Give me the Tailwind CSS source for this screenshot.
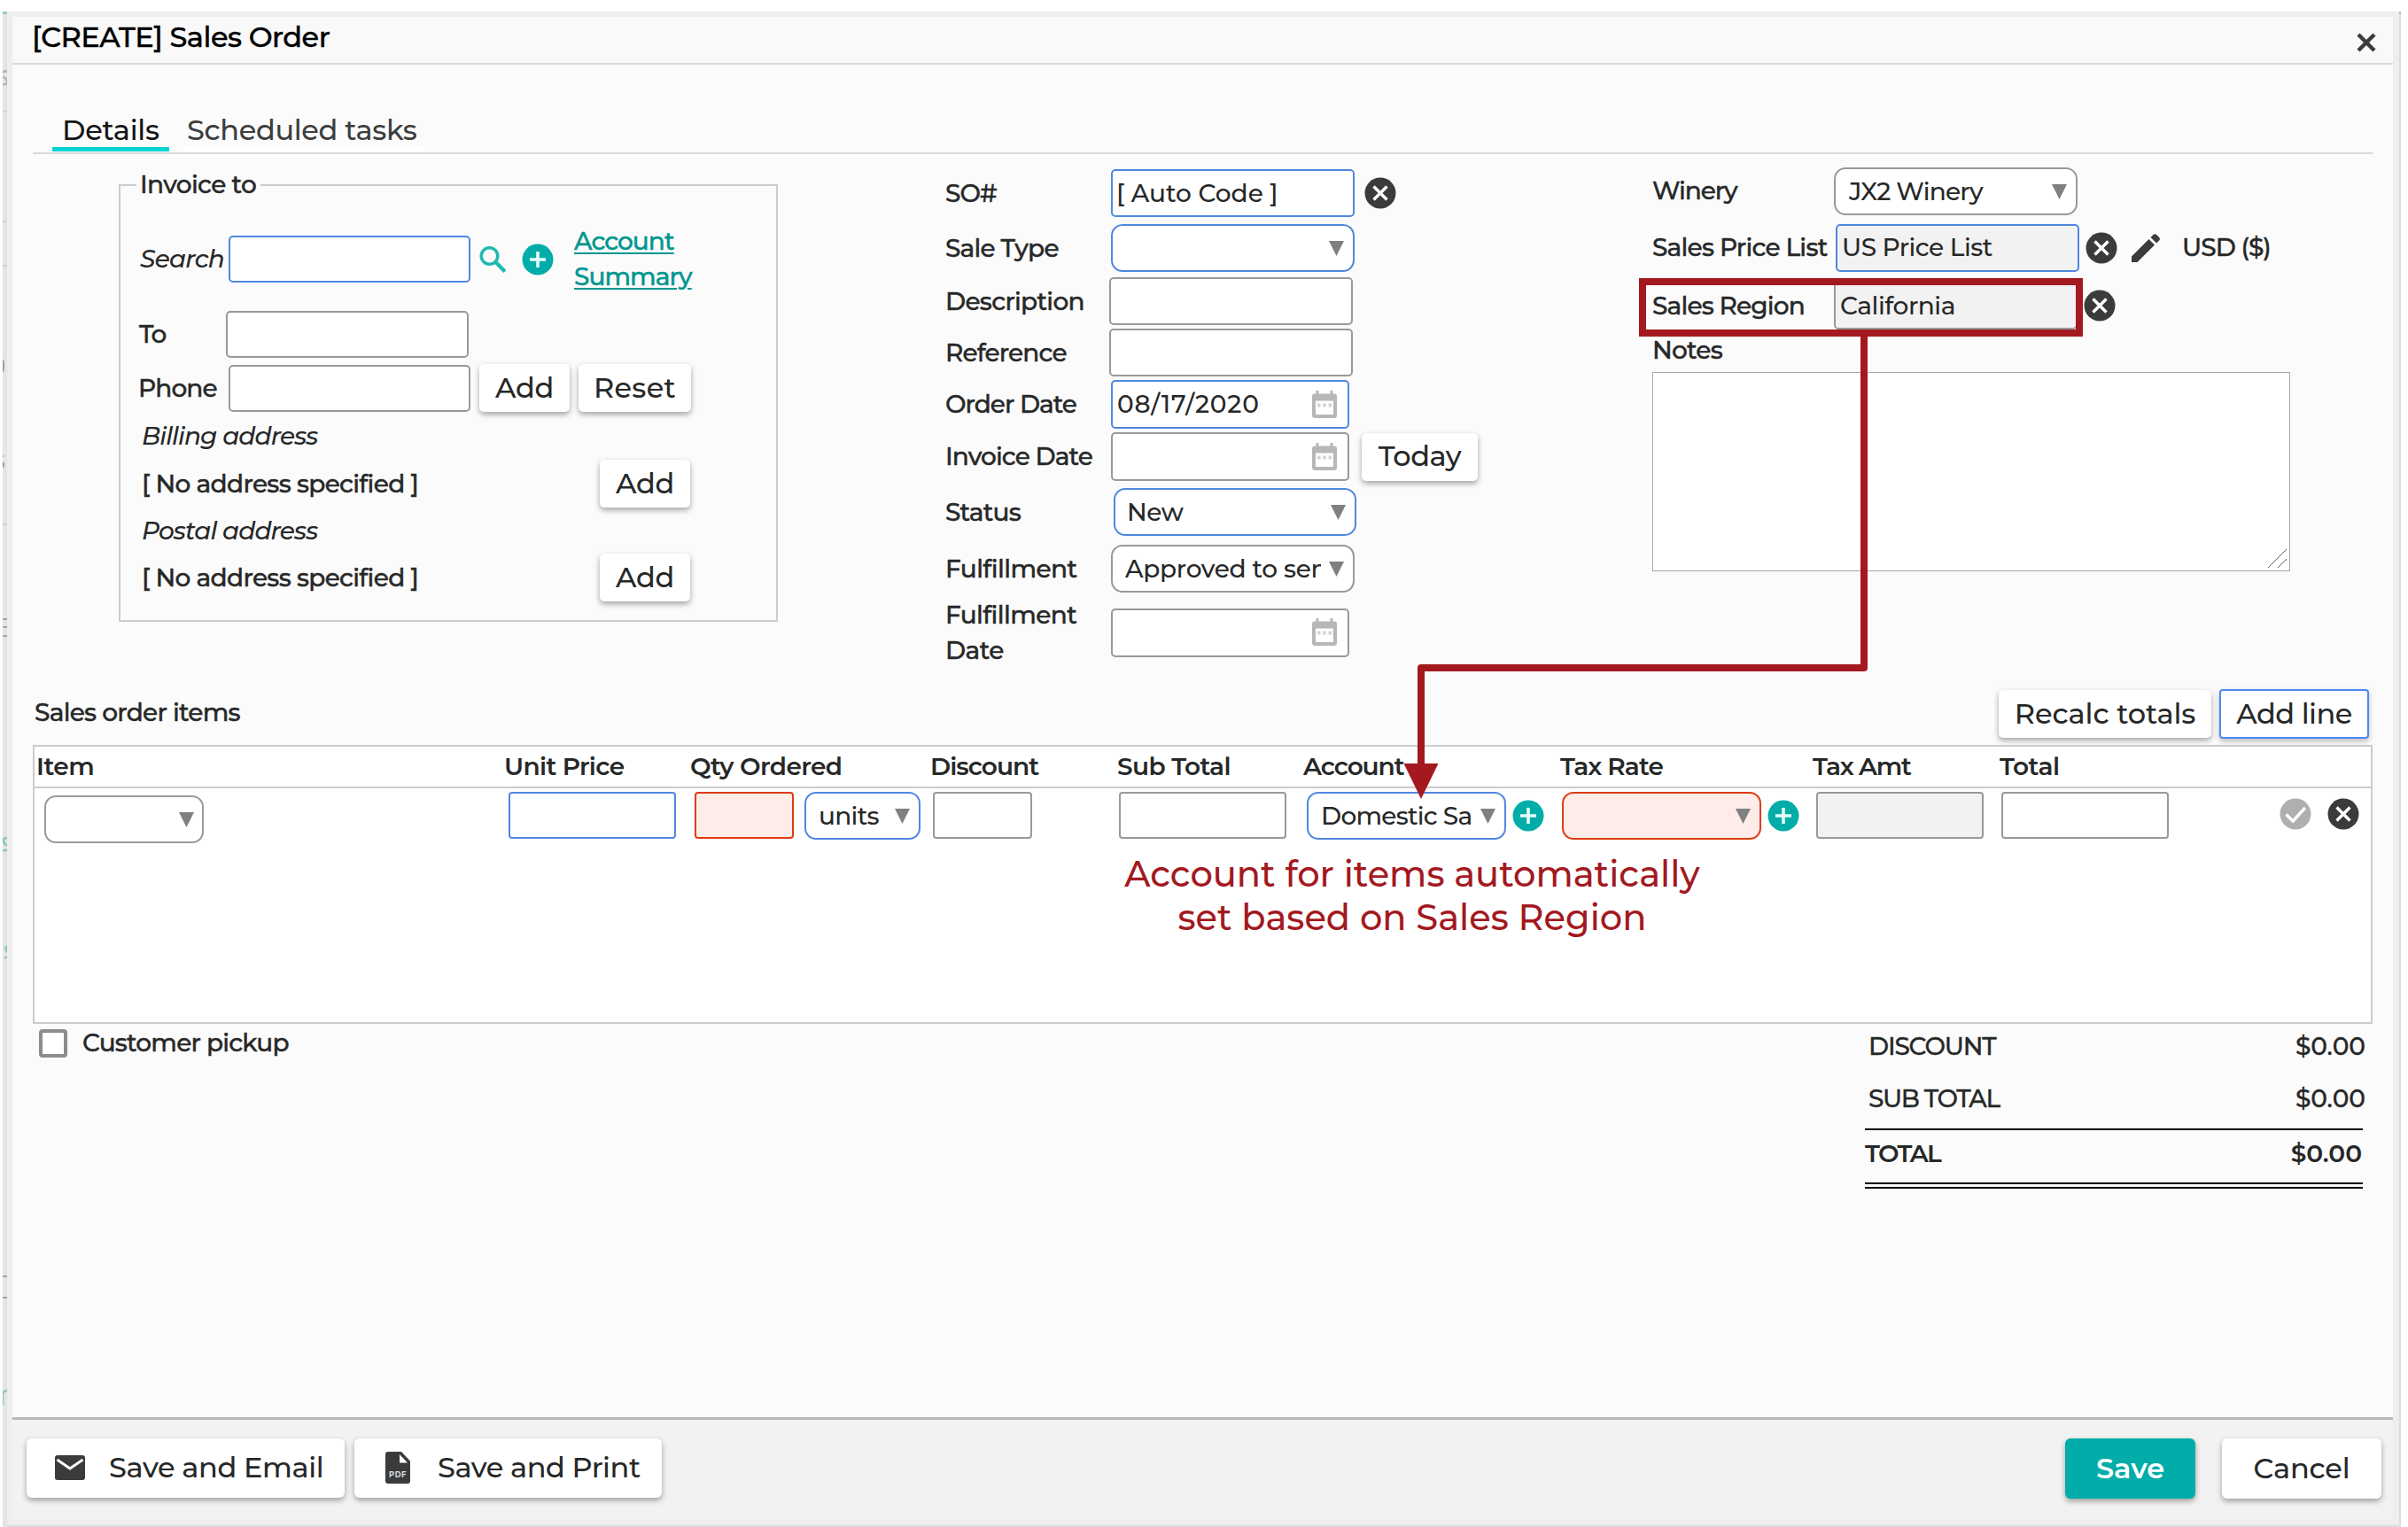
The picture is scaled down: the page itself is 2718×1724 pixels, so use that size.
<!DOCTYPE html>
<html lang="en">
<head>
    <meta charset="UTF-8">
    <meta name="viewport" content="width=device-width, initial-scale=1.0">
    <title>[CREATE] Sales Order</title>
    <!-- Tailwind CSS -->
    <script src="https://cdn.jsdelivr.net/npm/@tailwindcss/browser@4"></script>
</head>
<body class="relative w-[2718px] h-[1724px] overflow-hidden bg-white font-['Montserrat','Inter',sans-serif] text-[28px] leading-[40px] font-medium text-[#262828] whitespace-nowrap">
    <!-- Icon sprite -->
    <svg class="hidden">
        <symbol id="i-clear" viewBox="0 0 36 36"><circle cx="18" cy="18" r="17.5" fill="#3a3c3b"/><path d="M10.5 10.5l15 15M25.5 10.5l-15 15" stroke="#fff" stroke-width="3.4"/></symbol>
        <symbol id="i-plus" viewBox="0 0 36 36"><circle cx="18" cy="18" r="17.5" fill="#02ada9"/><path d="M18 9v18M9 18h18" stroke="#e6fbfa" stroke-width="3.6"/></symbol>
        <symbol id="i-check" viewBox="0 0 36 36"><circle cx="18" cy="18" r="17.5" fill="#aeb0af"/><path d="M7.500 18.500l7.500 7.500L29 11" fill="none" stroke="#fff" stroke-width="3.4"/></symbol>
        <symbol id="i-arrow" viewBox="0 0 17 17"><path d="M0 0h17L8.500 17z" fill="#808080"/></symbol>
        <symbol id="i-cal" viewBox="0 0 28 32"><path d="M4.500 0h3v3.500h13V0h3v3.500H25a3 3 0 0 1 3 3V28a3 3 0 0 1-3 3H3a3 3 0 0 1-3-3V6.500a3 3 0 0 1 3-3h1.500z" fill="#b6b8b7"/><path d="M4 11.500h20V27H4z" fill="#fff"/><path d="M6 14.500h3.500v4H6zM12.200 14.500h3.500v4h-3.500zM18.500 14.500H22v4h-3.500z" fill="#d2d3d3"/></symbol>
    </svg>

    <!-- Page behind the dialog -->
    <div class="absolute left-[3px] top-[13px] w-[2707px] h-[1711px] bg-[#dcdcdc] border-t-[3px] border-[#8fcfcb]"></div>
    <svg class="absolute left-[3px] top-0 w-[5px] h-[1724px]" viewBox="0 0 5 1724" fill="none">
        <path d="M0 16h5v1708H0z" fill="#e3e4e4"/>
        <path d="M0 82q4-4 5 0M0 87q5 1 5 5t-5 3" stroke="#b5b5b5" stroke-width="2.500"/>
        <path d="M0 126h5M0 250h5M0 300h5M0 592h5" stroke="#d2d2d2" stroke-width="2"/>
        <path d="M0 406q2 7 0 14M0 514v2M0 522q2 2 0 6" stroke="#999" stroke-width="2"/>
        <path d="M0 699h5M0 708h5M0 718h5M0 1441h5M0 1465h5" stroke="#a5a5a5" stroke-width="2"/>
        <path d="M5 946q-5 0-4 4t4 4M0 960h5M5 1068q-3 3 0 7M2 1081h3M0 1574q1-4 5-4M0 1574v12" stroke="#8cc5c3" stroke-width="2.500"/>
    </svg>

    <!-- Dialog -->
    <div class="absolute left-[8px] top-[13px] w-[2700px] h-[1709px] border-[6px] border-r-[7px] border-b-[7px] border-[#eee] bg-[#fbfbfb] flex flex-col">
        <!-- Title bar -->
        <header class="h-[54px] shrink-0 border-b-2 border-[#dadada] bg-[#f9f9f9] flex items-center justify-between pl-[22px] pr-[19px] pb-[6px] text-[32px] text-black tracking-[-.5px]">
            <h1 class="[-webkit-text-stroke:.4px]">[CREATE] Sales Order</h1>
            <svg class="w-[22px] h-[22px] mt-[12px]" viewBox="0 0 22 22"><path d="M2 2l18 18M20 2L2 20" stroke="#3a3c3b" stroke-width="4.500"/></svg>
        </header>

        <main class="grow px-[23px]">
            <!-- Tabs -->
            <nav class="h-[101px] pt-[55px] pl-[22px] flex gap-[12px] border-b-2 border-[#dadada] text-[32px] leading-[38px]">
                <div class="w-[132px] h-[43px] border-b-[5px] border-[#00d2d0] pl-[11px] tracking-[-.28px] text-[#141616]">Details</div>
                <div class="w-[280px] h-[43px] rounded-b-xl border-b-[5px] border-white pl-[8px] tracking-[-.35px] text-[#3c3e3e]">Scheduled tasks</div>
            </nav>

            <div class="flex h-[605px]">
                <!-- Invoice to -->
                <section class="relative ml-[97px] mt-[34px] w-[744px] h-[494px] shrink-0 border-2 border-[#ccc] pl-[20px]">
                    <div class="absolute left-[18px] -top-[22px] bg-[#fbfbfb] px-[4px] w-[140px] [-webkit-text-stroke:.4px] tracking-[-.65px]">Invoice to</div>
                    <div class="mt-[42px] h-[81px] flex items-center">
                        <div class="w-[102px] pl-[2px] pb-px italic tracking-[-.75px]">Search</div>
                        <div class="w-[273px] h-[53px] bg-white border-2 border-[#5087e0] rounded-[5px]"></div>
                        <svg class="ml-[10px] w-[30px] h-[31px]" viewBox="0 0 30 31" fill="none" stroke="#21b8b4"><circle cx="11.500" cy="12" r="9.300" stroke-width="3.400"/><path d="M18 18.500l11 11" stroke-width="4.400"/></svg>
                        <svg class="ml-[18px] w-[36px] h-[36px]"><use href="#i-plus"/></svg>
                        <div class="ml-[23px] pb-[2px] [-webkit-text-stroke:.4px] text-[#00968f] underline decoration-2 underline-offset-[3px]">
                            <div class="tracking-[-.95px]">Account</div>
                            <div class="tracking-[-.95px]">Summary</div>
                        </div>
                    </div>
                    <div class="mt-[18px] h-[53px] flex items-center">
                        <div class="w-[99px] pl-px pb-px [-webkit-text-stroke:.4px] tracking-[-1.3px]">To</div>
                        <div class="w-[274px] h-[53px] bg-white border-2 border-[#999] rounded-[5px]"></div>
                    </div>
                    <div class="mt-[7px] h-[54px] flex items-center">
                        <div class="w-[102px] pb-px [-webkit-text-stroke:.4px] tracking-[-.9px]">Phone</div>
                        <div class="w-[273px] h-[53px] bg-white border-2 border-[#999] rounded-[5px]"></div>
                        <div class="ml-[10px] w-[102px] h-[54px] bg-white rounded-[5px] shadow-[0_3px_6px_rgba(0,0,0,.35)] flex items-center justify-center text-[32px] tracking-[-.3px]">Add</div>
                        <div class="ml-[10px] w-[127px] h-[54px] bg-white rounded-[5px] shadow-[0_3px_6px_rgba(0,0,0,.35)] flex items-center justify-center text-[32px] tracking-[.3px]">Reset</div>
                    </div>
                    <div class="h-[54px] pl-[4px] flex items-center italic tracking-[-.9px]">Billing address</div>
                    <div class="h-[54px] pl-[4px] flex items-center">
                        <div class="w-[517px] pb-px [-webkit-text-stroke:.4px] tracking-[-.68px]">[ No address specified ]</div>
                        <div class="w-[102px] h-[54px] bg-white rounded-[5px] shadow-[0_3px_6px_rgba(0,0,0,.35)] flex items-center justify-center text-[32px] tracking-[-.3px]">Add</div>
                    </div>
                    <div class="h-[52px] pl-[4px] flex items-center italic tracking-[-.9px]">Postal address</div>
                    <div class="h-[54px] pl-[4px] flex items-center">
                        <div class="w-[517px] pb-px [-webkit-text-stroke:.4px] tracking-[-.68px]">[ No address specified ]</div>
                        <div class="w-[102px] h-[54px] bg-white rounded-[5px] shadow-[0_3px_6px_rgba(0,0,0,.35)] flex items-center justify-center text-[32px] tracking-[-.3px]">Add</div>
                    </div>
                </section>

                <!-- Order details -->
                <section class="ml-[189px] pt-[17px] w-[798px] shrink-0">
                    <div class="h-[54px] flex items-center">
                        <div class="w-[187px] pb-px [-webkit-text-stroke:.4px] tracking-[-1px]">SO#</div>
                        <div class="w-[275px] h-[54px] bg-white border-2 border-[#5087e0] rounded-[5px] pl-[4px] flex items-center pb-px">[ Auto Code ]</div>
                        <svg class="ml-[11px] w-[36px] h-[36px]"><use href="#i-clear"/></svg>
                    </div>
                    <div class="mt-[8px] h-[54px] flex items-center">
                        <div class="w-[187px] pb-px [-webkit-text-stroke:.4px] tracking-[-.8px]">Sale Type</div>
                        <div class="w-[275px] h-[54px] bg-white border-2 border-[#5087e0] rounded-[13px] pr-[10px] flex items-center justify-end"><svg class="w-[17px] h-[17px]"><use href="#i-arrow"/></svg></div>
                    </div>
                    <div class="mt-[6px] h-[54px] flex items-center">
                        <div class="w-[185px] pb-px [-webkit-text-stroke:.4px] tracking-[-.72px]">Description</div>
                        <div class="w-[275px] h-[54px] bg-white border-2 border-[#999] rounded-[5px]"></div>
                    </div>
                    <div class="mt-[4px] h-[54px] flex items-center">
                        <div class="w-[185px] pb-px [-webkit-text-stroke:.4px] tracking-[-.87px]">Reference</div>
                        <div class="w-[275px] h-[54px] bg-white border-2 border-[#999] rounded-[5px]"></div>
                    </div>
                    <div class="mt-[4px] h-[55px] flex items-center">
                        <div class="w-[187px] pb-[2px] [-webkit-text-stroke:.4px] tracking-[-1px]">Order Date</div>
                        <div class="w-[269px] h-[55px] bg-white border-2 border-[#5087e0] rounded-[5px] pl-[5px] pr-[12px] flex items-center justify-between tracking-[.8px]"><span class="pb-px">08/17/2020</span><svg class="w-[28px] h-[32px]"><use href="#i-cal"/></svg></div>
                    </div>
                    <div class="mt-[4px] h-[55px] flex items-center">
                        <div class="w-[187px] pb-[2px] [-webkit-text-stroke:.4px] tracking-[-.9px]">Invoice Date</div>
                        <div class="w-[269px] h-[55px] bg-white border-2 border-[#999] rounded-[5px] pr-[12px] flex items-center justify-end"><svg class="w-[28px] h-[32px]"><use href="#i-cal"/></svg></div>
                        <div class="ml-[14px] w-[131px] h-[54px] bg-white rounded-[5px] shadow-[0_3px_6px_rgba(0,0,0,.35)] flex items-center justify-center pb-[2px] text-[32px] tracking-[-.45px]">Today</div>
                    </div>
                    <div class="mt-[8px] h-[54px] flex items-center">
                        <div class="w-[190px] pb-px [-webkit-text-stroke:.4px] tracking-[-.8px]">Status</div>
                        <div class="w-[274px] h-[54px] bg-white border-2 border-[#5087e0] rounded-[13px] pl-[13px] pr-[10px] flex items-center justify-between tracking-[-.4px]"><span class="pb-px">New</span><svg class="w-[17px] h-[17px]"><use href="#i-arrow"/></svg></div>
                    </div>
                    <div class="mt-[10px] h-[54px] flex items-center">
                        <div class="w-[187px] pb-px [-webkit-text-stroke:.4px] tracking-[-.57px]">Fulfillment</div>
                        <div class="w-[275px] h-[54px] bg-white border-2 border-[#999] rounded-[13px] pl-[14px] pr-[10px] flex items-center justify-between tracking-[-.3px]"><span class="w-[221px] overflow-hidden pb-px">Approved to send</span><svg class="w-[17px] h-[17px]"><use href="#i-arrow"/></svg></div>
                    </div>
                    <div class="mt-[5px] h-[80px] flex items-center">
                        <div class="w-[187px] pb-px [-webkit-text-stroke:.4px] tracking-[-.6px]">Fulfillment<br>Date</div>
                        <div class="w-[269px] h-[55px] bg-white border-2 border-[#999] rounded-[5px] pr-[12px] flex items-center justify-end"><svg class="w-[28px] h-[32px]"><use href="#i-cal"/></svg></div>
                    </div>
                </section>

                <!-- Winery, pricing and notes -->
                <section class="pt-[15px]">
                    <div class="h-[54px] flex items-center">
                        <div class="w-[205px] pb-[2px] [-webkit-text-stroke:.4px] tracking-[-1.1px]">Winery</div>
                        <div class="w-[275px] h-[54px] bg-white border-2 border-[#999] rounded-[13px] pl-[15px] pr-[10px] flex items-center justify-between tracking-[-.8px]"><span class="pb-px">JX2 Winery</span><svg class="w-[17px] h-[17px]"><use href="#i-arrow"/></svg></div>
                    </div>
                    <div class="mt-[10px] h-[54px] flex items-center">
                        <div class="w-[207px] pb-[2px] [-webkit-text-stroke:.4px] tracking-[-.78px]">Sales Price List</div>
                        <div class="w-[275px] h-[54px] bg-[#f2f2f2] border-2 border-[#5087e0] rounded-[5px] pl-[5px] pb-[2px] flex items-center tracking-[-.5px]">US Price List</div>
                        <svg class="ml-[7px] w-[36px] h-[36px]"><use href="#i-clear"/></svg>
                        <svg class="ml-[16px] w-[32px] h-[32px]" viewBox="0 0 32 32" fill="#3a3c3b"><path d="M0 25.500L19.500 6l6.500 6.500L6.500 32H0zM21.500 4l3-3q1.800-1.600 3.600 0l3 3q1.600 1.800 0 3.600l-3 3z"/></svg>
                        <div class="ml-[25px] pb-[2px] [-webkit-text-stroke:.4px] tracking-[-.95px]">USD ($)</div>
                    </div>
                    <div class="mt-[11px] h-[54px] flex items-center">
                        <div class="w-[205px] pb-px [-webkit-text-stroke:.4px] tracking-[-.85px]">Sales Region</div>
                        <div class="w-[275px] h-[54px] bg-[#f2f2f2] border-2 border-[#999] rounded-[5px] pl-[5px] pb-px flex items-center tracking-[-.45px]">California</div>
                        <svg class="ml-[7px] w-[36px] h-[36px]"><use href="#i-clear"/></svg>
                    </div>
                    <div class="mt-[3px] [-webkit-text-stroke:.4px] tracking-[-.75px]">Notes</div>
                    <div class="mt-[5px] w-[720px] h-[225px] bg-white border border-[#a9a9a9] flex items-end justify-end p-[2px]">
                        <svg class="w-[22px] h-[22px]" viewBox="0 0 22 22" stroke="#666"><path d="M0 21L21 0M11 21L21 11"/></svg>
                    </div>
                </section>
            </div>

            <!-- Line items -->
            <div class="h-[62px] flex items-start">
                <div class="grow pt-[5px] pl-[2px] [-webkit-text-stroke:.4px] tracking-[-.74px]">Sales order items</div>
                <div class="w-[240px] h-[54px] bg-white rounded-[5px] shadow-[0_3px_6px_rgba(0,0,0,.35)] flex items-center justify-center text-[32px] tracking-[-.1px]">Recalc totals</div>
                <div class="ml-[9px] mr-[4px] -mt-px w-[169px] h-[56px] bg-white rounded-[4px] border-2 border-[#4a8af4] shadow-[0_3px_6px_rgba(0,0,0,.25)] flex items-center justify-center text-[32px] tracking-[-.54px]">Add line</div>
            </div>
            <div class="h-[315px] border-2 border-[#ccc] bg-white">
                <div class="h-[47px] pb-[2px] border-b-2 border-[#ccc] grid grid-cols-[529px_211px_270px_211px_210px_290px_284px_211px_421px] items-center font-semibold">
                    <div class="pl-[2px] tracking-[-.5px]">Item</div>
                    <div class="pl-px tracking-[-.66px]">Unit Price</div>
                    <div class="tracking-[-.63px]">Qty Ordered</div>
                    <div class="pl-px tracking-[-.97px]">Discount</div>
                    <div class="pl-px tracking-[-.6px]">Sub Total</div>
                    <div class="pl-px tracking-[-1.1px]">Account</div>
                    <div class="pl-px tracking-[-.87px]">Tax Rate</div>
                    <div class="pl-[2px] tracking-[-1.2px]">Tax Amt</div>
                    <div class="pl-[2px] tracking-[-.4px]">Total</div>
                </div>
                <div class="pt-[4px] grid grid-cols-[529px_211px_270px_211px_210px_290px_284px_211px_421px] items-start">
                    <div class="pl-[11px] pt-[4px]">
                        <div class="w-[180px] h-[54px] bg-white border-2 border-[#999] rounded-[13px] pr-[9px] flex items-center justify-end"><svg class="w-[17px] h-[17px]"><use href="#i-arrow"/></svg></div>
                    </div>
                    <div class="pl-[6px]"><div class="w-[189px] h-[53px] border-2 border-[#5087e0] rounded-[4px]"></div></div>
                    <div class="pl-[5px] flex gap-[12px]">
                        <div class="w-[112px] h-[53px] bg-[#feece9] border-2 border-[#dd3c12] rounded-[4px]"></div>
                        <div class="w-[131px] h-[54px] border-2 border-[#5087e0] rounded-[13px] pl-[14px] pr-[10px] flex items-center justify-between tracking-[-.7px]"><span class="pb-px">units</span><svg class="w-[17px] h-[17px]"><use href="#i-arrow"/></svg></div>
                    </div>
                    <div class="pl-[4px]"><div class="w-[112px] h-[53px] border-2 border-[#999] rounded-[4px]"></div></div>
                    <div class="pl-[3px]"><div class="w-[189px] h-[53px] border-2 border-[#999] rounded-[4px]"></div></div>
                    <div class="pl-[5px] flex items-center">
                        <div class="w-[225px] h-[54px] border-2 border-[#5087e0] rounded-[13px] pl-[14px] pr-[10px] flex items-center justify-between tracking-[-.75px]"><span class="pb-px">Domestic Sa</span><svg class="w-[17px] h-[17px]"><use href="#i-arrow"/></svg></div>
                        <svg class="ml-[7px] w-[36px] h-[36px]"><use href="#i-plus"/></svg>
                    </div>
                    <div class="pl-[3px] flex items-center">
                        <div class="w-[225px] h-[54px] bg-[#feece9] border-2 border-[#dd3c12] rounded-[13px] pr-[10px] flex items-center justify-end"><svg class="w-[17px] h-[17px]"><use href="#i-arrow"/></svg></div>
                        <svg class="ml-[7px] w-[36px] h-[36px]"><use href="#i-plus"/></svg>
                    </div>
                    <div class="pl-[6px]"><div class="w-[189px] h-[53px] bg-[#f2f2f2] border-2 border-[#999] rounded-[4px]"></div></div>
                    <div class="pl-[4px] flex items-start">
                        <div class="w-[189px] h-[53px] border-2 border-[#999] rounded-[4px]"></div>
                        <svg class="ml-[125px] mt-[7px] w-[36px] h-[36px]"><use href="#i-check"/></svg>
                        <svg class="ml-[18px] mt-[7px] w-[36px] h-[36px]"><use href="#i-clear"/></svg>
                    </div>
                </div>
            </div>

            <!-- Pickup and totals -->
            <div class="flex justify-between">
                <div class="flex items-start">
                    <div class="mt-[6px] ml-[7px] w-[32px] h-[32px] bg-white border-4 border-[#8c8c8c] rounded-[4px]"></div>
                    <div class="mt-px ml-[17px] [-webkit-text-stroke:.4px] tracking-[-.8px]">Customer pickup</div>
                </div>
                <div class="mr-[11px] w-[562px]">
                    <div class="-mr-[3px] pl-[4px] mt-[5px] h-[40px] [-webkit-text-stroke:.3px] flex justify-between"><span class="tracking-[-1.2px]">DISCOUNT</span><span>$0.00</span></div>
                    <div class="-mr-[3px] pl-[4px] mt-[19px] h-[54px] [-webkit-text-stroke:.3px] flex justify-between"><span class="tracking-[-1.4px]">SUB TOTAL</span><span>$0.00</span></div>
                    <div class="h-[63px] border-t-2 border-black pt-[6px] pr-px flex justify-between font-semibold"><span class="tracking-[-1.7px]">TOTAL</span><span>$0.00</span></div>
                    <div class="-mt-[2px] h-[7px] border-y-2 border-black"></div>
                </div>
            </div>
        </main>

        <!-- Action bar -->
        <footer class="h-[115px] shrink-0 border-t-[3px] border-[#b9b9b9] bg-[#f2f2f2] pt-[21px] pl-[16px] pr-[13px] flex items-start text-[32px]">
            <div class="w-[359px] h-[67px] bg-white rounded-[6px] shadow-[0_3px_6px_rgba(0,0,0,.35)] pl-[32px] flex items-center pb-px tracking-[-.4px]">
                <svg class="w-[34px] h-[28px] mr-[27px]" viewBox="0 0 34 28"><rect width="34" height="28" rx="3" fill="#3a3c3b"/><path d="M2.500 5L17 15 31.500 5" fill="none" stroke="#fff" stroke-width="3"/></svg>
                Save and Email
            </div>
            <div class="ml-[11px] w-[347px] h-[67px] bg-white rounded-[6px] shadow-[0_3px_6px_rgba(0,0,0,.35)] pl-[35px] flex items-center pb-px tracking-[-.45px]">
                <svg class="w-[28px] h-[36px] mr-[31px]" viewBox="0 0 28 36"><path d="M3 0h15l10 10.500V33a3 3 0 0 1-3 3H3a3 3 0 0 1-3-3V3a3 3 0 0 1 3-3z" fill="#3a3c3b"/><path d="M16 3v9.500h9z" fill="#fff"/><text x="14" y="29" text-anchor="middle" font-family="Inter" font-weight="700" font-size="9.500" letter-spacing=".4" fill="#ddd">PDF</text></svg>
                Save and Print
            </div>
            <div class="ml-auto w-[147px] h-[68px] bg-[#02ada9] rounded-[6px] shadow-[0_3px_6px_rgba(0,0,0,.35)] flex items-center justify-center font-semibold text-white">Save</div>
            <div class="ml-[30px] w-[180px] h-[68px] bg-white rounded-[6px] shadow-[0_3px_6px_rgba(0,0,0,.35)] flex items-center justify-center tracking-[-.2px]">Cancel</div>
        </footer>
    </div>

    <!-- Annotation -->
    <div class="absolute left-[1850px] top-[314px] w-[501px] h-[66px] border-8 border-[#a3191f]"></div>
    <svg class="absolute left-[1580px] top-[376px] w-[540px] h-[530px]" viewBox="1580 376 540 530">
        <path d="M2104 378V754H1604V866" fill="none" stroke="#a3191f" stroke-width="8" stroke-linejoin="round"/>
        <path d="M1584.500 862h39l-19.500 40z" fill="#a3191f"/>
    </svg>
    <div class="absolute left-[1244px] top-[962px] w-[700px] text-center text-[40px] leading-[49px] text-[#a3191f]">
        <div>Account for items automatically</div>
        <div>set based on Sales Region</div>
    </div>
</body>
</html>
